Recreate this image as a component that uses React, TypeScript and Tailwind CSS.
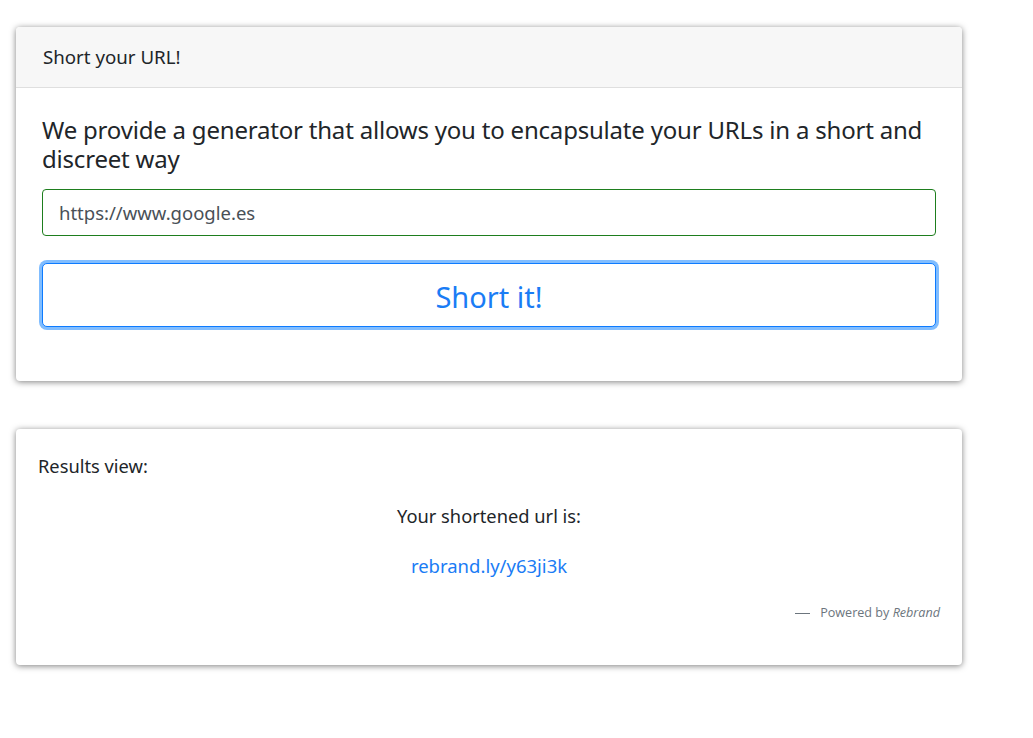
export default function App() {
  return (
    <div className="min-h-[738px] bg-white pl-4 pt-[27px] text-[#212529] [font-family:'Segoe_UI','Noto_Sans',sans-serif]">
      <div className="w-[946px] rounded-[4px] bg-white shadow-[0_1px_6px_rgba(0,0,0,0.5)]">
        <div className="h-[61px] flex items-center px-[27px] bg-[#f7f7f7] border-b border-[#dfdfdf] rounded-t-[4px] text-[18.7px]">
          Short your URL!
        </div>
        <div className="px-[26px] pt-[27px] pb-[54px]">
          <h4 className="text-[24px] leading-[29px] tracking-[-0.2px]">
            We provide a generator that allows you to encapsulate your URLs in a short and discreet way
          </h4>
          <input
            className="mt-[16px] block w-full h-[47px] rounded-[4px] border border-[#1e7e1e] px-4 text-[18.5px] text-[#495057] outline-none"
            defaultValue="https://www.google.es"
          />
          <button className="mt-[27px] block w-[894px] h-[64px] pt-[3px] rounded-[5px] border border-[#0d7bff] bg-white text-[29px] text-[#1a7cf5] ring-[3px] ring-[#80bdff]">
            Short it!
          </button>
        </div>
      </div>

      <div className="mt-12 w-[946px] h-[236px] rounded-[4px] bg-white shadow-[0_1px_6px_rgba(0,0,0,0.5)] px-[22px] pt-[25px]">
        <p className="text-[18.3px] leading-[24px]">Results view:</p>
        <p className="mt-[26px] text-center text-[18.3px] leading-[24px]">Your shortened url is:</p>
        <p className="mt-[26px] text-center text-[18.5px] leading-[24px]">
          <a className="text-[#1a7cf5]" href="#">rebrand.ly/y63ji3k</a>
        </p>
        <p className="mt-[26px] flex items-center justify-end text-[12.6px] text-[#6c757d] [font-family:'Open_Sans',sans-serif]">
          <span className="mr-[10px] inline-block w-[15px] h-px bg-[#6c757d]" />
          <span>
            Powered by <i>Rebrand</i>
          </span>
        </p>
      </div>
    </div>
  );
}
